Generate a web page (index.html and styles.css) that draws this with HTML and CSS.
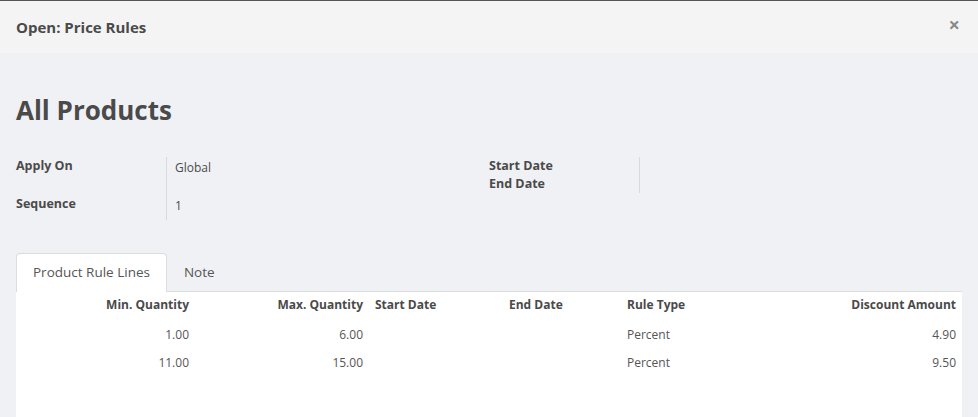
FILE: index.html
```html
<!DOCTYPE html>
<html>
<head>
<meta charset="utf-8">
<link rel="stylesheet" href="styles.css">
</head>
<body>
<div class="topline"></div>
<header class="modal-header">
  <h4 class="modal-title">Open: Price Rules</h4>
  <span class="close">×</span>
</header>
<main class="modal-body">
  <h1 class="title">All Products</h1>
  <div class="groups">
    <div class="group">
      <div class="row r1"><div class="label">Apply On</div><div class="value">Global</div></div>
      <div class="row r2"><div class="label">Sequence</div><div class="value">1</div></div>
    </div>
    <div class="group">
      <div class="row rc"><div class="label">Start Date<br>End Date</div><div class="value"></div></div>
    </div>
  </div>
  <div class="tabs">
    <div class="tab active">Product Rule Lines</div>
    <div class="tab">Note</div>
  </div>
  <div class="panel">
    <table class="lines">
      <colgroup>
        <col class="c1"><col class="c2"><col class="c3"><col class="c4"><col class="c5"><col class="c6">
      </colgroup>
      <thead>
        <tr><th class="num">Min. Quantity</th><th class="num">Max. Quantity</th><th>Start Date</th><th>End Date</th><th>Rule Type</th><th class="num">Discount Amount</th></tr>
      </thead>
      <tbody>
        <tr><td class="num">1.00</td><td class="num">6.00</td><td></td><td></td><td>Percent</td><td class="num">4.90</td></tr>
        <tr><td class="num">11.00</td><td class="num">15.00</td><td></td><td></td><td>Percent</td><td class="num">9.50</td></tr>
      </tbody>
    </table>
  </div>
</main>
</body>
</html>
```
FILE: styles.css
```css
* { box-sizing: border-box; }
html, body { margin: 0; padding: 0; }
body {
  width: 978px;
  height: 417px;
  overflow: hidden;
  background: #f0f1f5;
  font-family: "Open Sans", "Liberation Sans", sans-serif;
  color: #4c4c4c;
}
.topline { height: 1px; background: #555; }
.modal-header {
  height: 52px;
  background: #f4f4f5;
  display: flex;
  align-items: center;
  justify-content: space-between;
  padding: 0 16px 0 16px;
}
.modal-title {
  margin: 0;
  font-size: 15px;
  font-weight: 700;
  color: #4a4a4a;
}
.close {
  font-size: 20px;
  font-weight: 700;
  color: #8a8a8a;
  line-height: 1;
  margin-right: 2px;
  margin-top: -4px;
}
.modal-body { padding: 0 16px; }
.title {
  margin: 0;
  padding-top: 40px;
  height: 104px;
  font-size: 26px;
  font-weight: 700;
  color: #4a4a4a;
  line-height: 34px;
}
.groups { display: grid; grid-template-columns: 473px 473px; }
.row { display: grid; grid-template-columns: 150px 1fr; }
.label { font-size: 12.5px; font-weight: 700; line-height: 18px; color: #4a4a4a; }
.value {
  border-left: 1px solid #d9d9d9;
  padding: 2px 8px 0;
  font-size: 12px;
  line-height: 18px;
}
.r1 { height: 38px; }
.r2 { height: 25px; }
.rc { height: 35px; }
.tabs { display: flex; margin-top: 33px; height: 38px; }
.tab {
  padding: 0 16px;
  font-size: 13.5px;
  line-height: 37px;
  border: 1px solid transparent;
  border-bottom: none;
  color: #555;
}
.tab.active {
  background: #fff;
  border-color: #dcdcdc;
  border-radius: 4px 4px 0 0;
  height: 39px;
  position: relative;
  z-index: 1;
}
.panel {
  background: #fff;
  border-top: 1px solid #dcdcdc;
  height: 126px;
}
.lines { width: 946px; border-collapse: collapse; table-layout: fixed; }
.c1 { width: 179px; } .c2 { width: 174px; } .c3 { width: 134px; }
.c4 { width: 118px; } .c5 { width: 159px; } .c6 { width: 182px; }
.lines th {
  font-size: 12px; font-weight: 700; text-align: left;
  height: 28px; padding: 0 6px 3px; color: #4a4a4a;
}
.lines td { font-size: 12px; height: 28px; padding: 0 6px; color: #555; }
.lines .num { text-align: right; }
```
